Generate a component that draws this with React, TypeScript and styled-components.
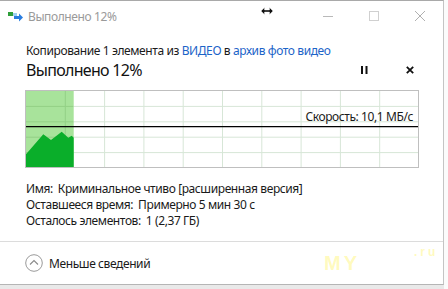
import React from "react";
import styled, { createGlobalStyle } from "styled-components";

const Global = createGlobalStyle`
  html, body { margin: 0; padding: 0; background: #e9e9e9; }
  body { font-family: "Noto Sans", "Open Sans", sans-serif; overflow: hidden; letter-spacing: -0.4px; }
  * { box-sizing: border-box; }
`;

const Page = styled.div`
  width: 448px;
  height: 289px;
  background: linear-gradient(to right, transparent 444px, #fbfbfb 444px);
`;

const Window = styled.div`
  position: relative;
  width: 444px;
  height: 285px;
  background: #fff;
  border-top: 1px solid #a9a9a9;
  border-right: 1px solid #c4c4c4;
  border-bottom: 1px solid #b5b5b5;
  display: flex;
  flex-direction: column;
`;

const TitleBar = styled.div`
  height: 30px;
  display: flex;
  align-items: center;
  padding-left: 8px;
`;

const TitleText = styled.span`
  margin-left: 4px;
  font-size: 12px;
  color: #9a9a9a;
  flex: 1;
`;

const WinButton = styled.div`
  width: 46px;
  height: 30px;
  display: flex;
  align-items: center;
  justify-content: center;
`;

const Content = styled.div`
  padding: 12px 24px 0 26px;
  flex: 1;
`;

const CopyLine = styled.div`
  font-size: 12px;
  line-height: 16px;
  color: #1a1a1a;
`;

const Link = styled.span`
  color: #1c64c8;
`;

const HeadRow = styled.div`
  display: flex;
  align-items: center;
  height: 22px;
  margin-right: -14px;
`;

const Heading = styled.div`
  font-size: 16px;
  letter-spacing: -0.7px;
  color: #111;
  flex: 1;
`;

const ActionBtn = styled.div<{ $w: number }>`
  width: ${(p) => p.$w}px;
  display: flex;
  justify-content: center;
`;

const GraphBox = styled.div`
  position: relative;
  margin-top: 9px;
  margin-left: -1px;
  width: 394px;
  height: 78px;
`;

const SpeedLabel = styled.span`
  position: absolute;
  right: 6px;
  top: 19px;
  font-size: 12px;
  line-height: 16px;
  color: #1a1a1a;
`;

const InfoList = styled.div`
  margin-top: 13px;
  display: flex;
  flex-direction: column;
`;

const InfoRow = styled.div`
  font-size: 12px;
  line-height: 16px;
  color: #1a1a1a;
  display: flex;
`;

const InfoLabel = styled.span`
  margin-right: 5px;
`;

const Footer = styled.div`
  height: 43px;
  border-top: 1px solid #dcdcdc;
  display: flex;
  align-items: center;
  padding-left: 25px;
  position: relative;
`;

const FooterText = styled.span`
  font-size: 12px;
  color: #1a1a1a;
  margin-left: 6px;
`;

const Watermark = styled.span<{ $x: number; $y: number; $s: number }>`
  position: absolute;
  left: ${(p) => p.$x}px;
  top: ${(p) => p.$y}px;
  font-size: ${(p) => p.$s}px;
  font-weight: bold;
  color: rgba(255, 245, 110, 0.45);
  font-family: "Liberation Sans", sans-serif;
  letter-spacing: 3px;
`;

const Cursor = styled.svg`
  position: absolute;
  left: 261px;
  top: 6px;
`;

const vLines = [40.3, 79.6, 118.9, 158.2, 197.5, 236.8, 276.1, 315.4, 354.7];
const hLines = [16.4, 31.8, 47.2, 62.6];

function Chart() {
  return (
    <svg width={394} height={78} viewBox="0 0 394 78" style={{ display: "block" }}>
      <rect x={0} y={0} width={394} height={78} fill="#fff" />
      <rect x={1} y={1} width={47.7} height={76} fill="#a8e39b" />
      {vLines.map((x) => (
        <line key={x} x1={x} y1={1} x2={x} y2={77} stroke={x < 48 ? "#93d086" : "#d7e6d7"} strokeWidth={1} />
      ))}
      {hLines.map((y) => (
        <React.Fragment key={y}>
          <line x1={1} y1={y} x2={48.7} y2={y} stroke="#93d086" strokeWidth={1} />
          <line x1={48.7} y1={y} x2={393} y2={y} stroke="#d7e6d7" strokeWidth={1} />
        </React.Fragment>
      ))}
      <polygon
        points="1,64.3 18.3,44.3 26,50 36.7,41.7 43.3,47.7 46.7,45.7 48.7,47.7 48.7,77 1,77"
        fill="#0aae2a"
      />
      <line x1={0} y1={36.7} x2={394} y2={36.7} stroke="#000" strokeWidth={1.2} />
      <rect x={0.5} y={0.5} width={393} height={77} fill="none" stroke="#bfbfbf" />
    </svg>
  );
}

export default function App() {
  return (
    <Page>
      <Global />
      <Window>
        <TitleBar>
          <svg width={16} height={12} viewBox="0 0 16 12">
            <rect x={0} y={2} width={5} height={4} fill="#2e9e3a" />
            <rect x={5} y={3} width={4} height={3} fill="#9fd0f0" />
            <path d="M6 6 H11 V3.5 L15 7.5 L11 11.5 V9 H6 Z" fill="#2a7de0" />
          </svg>
          <TitleText>Выполнено 12%</TitleText>
          <WinButton>
            <svg width={10} height={10} viewBox="0 0 10 10">
              <line x1={0} y1={5.5} x2={10} y2={5.5} stroke="#b9b9b9" />
            </svg>
          </WinButton>
          <WinButton>
            <svg width={10} height={10} viewBox="0 0 10 10">
              <rect x={0.5} y={0.5} width={9} height={9} fill="none" stroke="#d0d0d0" />
            </svg>
          </WinButton>
          <WinButton>
            <svg width={10} height={10} viewBox="0 0 10 10">
              <path d="M0 0 L10 10 M10 0 L0 10" stroke="#b0b0b0" strokeWidth={1} />
            </svg>
          </WinButton>
        </TitleBar>
        <Cursor width={12} height={8} viewBox="0 0 12 8">
          <path d="M0 4 L3.5 0.5 V3 H8.5 V0.5 L12 4 L8.5 7.5 V5 H3.5 V7.5 Z" fill="#111" stroke="#fff" strokeWidth={0.4} />
        </Cursor>
        <Content>
          <CopyLine>
            Копирование 1 элемента из <Link>ВИДЕО</Link> в <Link>архив фото видео</Link>
          </CopyLine>
          <HeadRow>
            <Heading>Выполнено 12%</Heading>
            <ActionBtn $w={46}>
              <svg width={7} height={8} viewBox="0 0 7 8">
                <rect x={0} y={0} width={2} height={8} fill="#111" />
                <rect x={4.5} y={0} width={2} height={8} fill="#111" />
              </svg>
            </ActionBtn>
            <ActionBtn $w={46}>
              <svg width={8} height={8} viewBox="0 0 8 8">
                <path d="M0.8 0.8 L7.2 7.2 M7.2 0.8 L0.8 7.2" stroke="#111" strokeWidth={1.8} />
              </svg>
            </ActionBtn>
          </HeadRow>
          <GraphBox>
            <Chart />
            <SpeedLabel>Скорость: 10,1 МБ/с</SpeedLabel>
          </GraphBox>
          <InfoList>
            <InfoRow>
              <InfoLabel>Имя:</InfoLabel>
              <span>Криминальное чтиво [расширенная версия]</span>
            </InfoRow>
            <InfoRow>
              <InfoLabel>Оставшееся время:</InfoLabel>
              <span>Примерно 5 мин 30 с</span>
            </InfoRow>
            <InfoRow>
              <InfoLabel>Осталось элементов:</InfoLabel>
              <span>1 (2,37 ГБ)</span>
            </InfoRow>
          </InfoList>
        </Content>
        <Footer>
          <svg width={18} height={18} viewBox="0 0 18 18">
            <circle cx={9} cy={9} r={8.3} fill="none" stroke="#9a9a9a" strokeWidth={1} />
            <path d="M5 10.5 L9 6.5 L13 10.5" fill="none" stroke="#8a8a8a" strokeWidth={1.1} />
          </svg>
          <FooterText>Меньше сведений</FooterText>
          <Watermark $x={324} $y={10} $s={20}>MY</Watermark>
          <Watermark $x={414} $y={3} $s={12}>.ru</Watermark>
        </Footer>
      </Window>
    </Page>
  );
}
